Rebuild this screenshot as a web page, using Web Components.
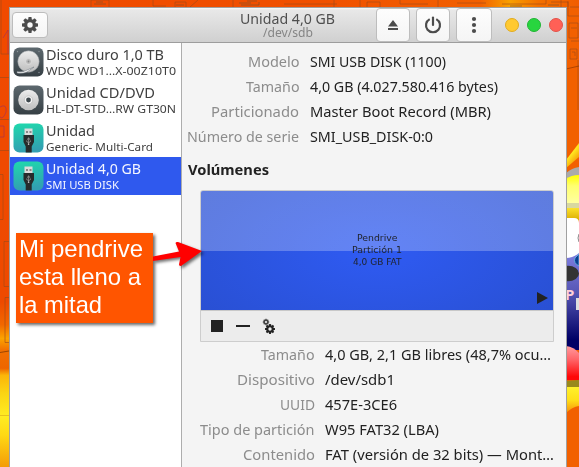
<!DOCTYPE html>
<html lang="es">
<head>
<meta charset="utf-8">
<title>Discos</title>
<style>
html,body{margin:0;width:579px;height:467px;overflow:hidden}
body{font-family:"Noto Sans",sans-serif}
</style>
</head>
<body>
<disk-desktop></disk-desktop>
<script>
const define=(name,html,ready)=>customElements.define(name,class extends HTMLElement{
  connectedCallback(){
    if(this.shadowRoot)return;
    const r=this.attachShadow({mode:'open'});
    const t=document.createElement('template');
    t.innerHTML=typeof html==='function'?html(this):html;
    r.append(t.content.cloneNode(true));
    if(ready)ready(this,r);
  }
});

// One line of text condensed or widened to a given pixel width.
define('fit-text',`<style>:host{display:block;white-space:pre;flex:none}span{display:inline-block;transform-origin:0 50%}</style><span><slot></slot></span>`,(el,r)=>{
  const s=r.querySelector('span'),w=+el.getAttribute('w');
  s.style.transform='scaleX('+(w/s.getBoundingClientRect().width)+')';
  el.style.width=w+'px';
});

define('wall-paper',`<style>:host{display:block;position:absolute;inset:0}svg{display:block}</style>
<svg width="579" height="467" viewBox="0 0 579 467">
<defs>
<linearGradient id="l" x1="0" y1="0" x2="0" y2="1"><stop offset="0" stop-color="#f04a00"/><stop offset=".64" stop-color="#ee4a00"/><stop offset=".69" stop-color="#f26800"/><stop offset=".72" stop-color="#fba300"/><stop offset=".745" stop-color="#f17000"/><stop offset=".785" stop-color="#ee6500"/><stop offset=".80" stop-color="#fbb508"/><stop offset=".84" stop-color="#fbd514"/><stop offset=".89" stop-color="#ffec22"/><stop offset=".93" stop-color="#ffd914"/><stop offset="1" stop-color="#f49c08"/></linearGradient>
<linearGradient id="t"><stop offset="0" stop-color="#f04a00"/><stop offset=".55" stop-color="#f05000"/><stop offset=".83" stop-color="#f26000"/><stop offset=".88" stop-color="#f8a000"/><stop offset=".93" stop-color="#f37000"/><stop offset="1" stop-color="#f15c00"/></linearGradient>
<linearGradient id="y" x1="0" y1="0" x2="0" y2="1"><stop offset="0" stop-color="#ffff00"/><stop offset=".35" stop-color="#ffff70"/><stop offset="1" stop-color="#ffffa8"/></linearGradient>
<linearGradient id="g" x1="0" y1="0" x2="0" y2="1"><stop offset="0" stop-color="#fce22c"/><stop offset="1" stop-color="#d9a800"/></linearGradient>
<linearGradient id="b" x1="0" y1="0" x2="0" y2="1"><stop offset="0" stop-color="#8585e8"/><stop offset=".45" stop-color="#5656b4"/><stop offset=".9" stop-color="#000066"/></linearGradient>
<linearGradient id="r" x1="0" y1="0" x2="0" y2="1"><stop offset="0" stop-color="#ff9ca0"/><stop offset=".4" stop-color="#ff6468"/><stop offset=".9" stop-color="#ff0808"/></linearGradient>
<linearGradient id="q" x1="0" y1="0" x2="0" y2="1"><stop offset="0" stop-color="#fff12c"/><stop offset=".5" stop-color="#ffdf18"/><stop offset="1" stop-color="#f79008"/></linearGradient>
<linearGradient id="d" x1="0" y1="0" x2=".6" y2="1"><stop offset="0" stop-color="#f26000"/><stop offset=".5" stop-color="#ffe820"/><stop offset="1" stop-color="#f58a00"/></linearGradient>
</defs>
<rect width="579" height="467" fill="url(#t)"/><rect y="8" width="10" height="459" fill="url(#l)"/>
<rect x="566" y="8" width="13" height="459" fill="#f26000"/>
<g fill="none" stroke="#9c4a18" stroke-opacity=".6">
<path d="M0 77.500h9M0 119.500h9M0 150.500h9M0 219.500h3v-45h-3M9 241.500h-5v45h5M9 297.500h-4v45h4M1 0v54h8"/>
<path d="M3 38l5-8v24M0 107q7-4 6 5q-3 8-6 5M0 126h4v11h-4" stroke="#a03058"/>
<path d="M0 352.500l9-1.500" stroke="#632800" stroke-width="1"/><path d="M0 415.500h9" stroke="#d8a818"/>
<path d="M91 7V0h18v7M153 0v6h13M175 7V2h11v5M190 7l8-7M233 0v7M284 4h53M334 0v7M360 7V0M367 7V2h13v5M400 0v4h28M438 0v7M457 3h29M502 4h44V0M551 2h17v5M561 0v7"/>
<path d="M94 4h12M96 2h7M239 3h12M241 5h18v-3M247 1h10M176 5h8M510 6h12M548 5h11" stroke="#76502c"/>
<path d="M568 1v15h11M570 7h9M569 23h9v15h-9zM571 28h6M571 41h8M570 49h7v10h-7zM572 52h3v4M578 60v50"/>
<path d="M566 69l13-3" stroke="#803000"/></g>
<path d="M566 160L579 143V157L566 168z" fill="url(#d)"/>
<path d="M566 173q6-5 13-6v9l-13 5z" fill="#aaa"/>
<path d="M566 179q5-4 13-4v31h-13z" fill="url(#y)"/>
<rect x="566" y="203" width="13" height="5" fill="#d8d8a0"/>
<rect x="566" y="208" width="13" height="13" fill="url(#g)"/>
<rect x="566" y="246" width="13" height="104" fill="url(#b)"/>
<path d="M566 218h8q5 0 5 5v30q-6 5-13 5z" fill="#fff"/><path d="M579 234q-2 4 0 8" stroke="#888" fill="none"/>
<path d="M579 254l-4 4q-2 5 4 8z" fill="#0b3f91" stroke="#65a9df"/>
<ellipse cx="568" cy="273.500" rx="11" ry="7.700" fill="#333"/>
<text x="565" y="300" font-family="Noto Sans" font-weight="700" font-size="15" fill="#ffd0d8">P</text>
<rect x="576" y="298" width="3" height="12" fill="#ddd"/>
<path d="M566 346q8 1 13 7v27h-13z" fill="url(#r)"/>
<path d="M566 381l13-1v7l-13 1z" fill="#99891c"/><path d="M566 387h13v19q-7 1-13 7z" fill="url(#q)"/>
</svg>`);

const gear=(cx,cy,r,hole,color)=>{
  let s='';
  for(let i=0;i<8;i++)s+=`<rect x="${cx-r*.21}" y="${cy-r}" width="${r*.42}" height="${r*.5}" rx="${r*.08}" transform="rotate(${i*45} ${cx} ${cy})" fill="${color}"/>`;
  return s+`<circle cx="${cx}" cy="${cy}" r="${(r*.76+hole)/2}" fill="none" stroke="${color}" stroke-width="${r*.76-hole}"/>`;
};
const C='#4c4c4c';
const glyphs={
  gear:`<svg width="18" height="18">${gear(9,9,8,2.7,C)}</svg>`,
  eject:`<svg width="18" height="18"><path d="M4 10.500L9 4l5 6.500zM4 12h10v2H4z" fill="${C}"/></svg>`,
  power:`<svg width="18" height="18"><path d="M5.700 3.100a7 7 0 1 0 6.600 0" fill="none" stroke="${C}" stroke-width="2.200"/><path d="M9 1.500v7.500" stroke="${C}" stroke-width="2.200" stroke-linecap="round"/></svg>`,
  more:`<svg width="18" height="18" fill="${C}"><circle cx="9" cy="3" r="2.100"/><circle cx="9" cy="9" r="2.100"/><circle cx="9" cy="15" r="2.100"/></svg>`
};
define('bar-button',el=>`<style>:host{display:flex;align-items:center;justify-content:center;box-sizing:border-box;border:1px solid #bdbdbd;border-radius:4px;background:linear-gradient(#fdfdfd,#f5f5f5);flex:none}svg{display:block}</style>${glyphs[el.getAttribute('icon')]}`);
define('window-dot',`<style>:host{display:block;width:14px;height:14px;box-sizing:border-box;border-radius:50%;background:var(--c);border:1px solid var(--e)}</style>`);

define('title-bar',`<style>
:host{display:flex;align-items:center;height:35px;box-sizing:border-box;border-bottom:1px solid #9d9d9d;background:linear-gradient(#fafafa 0,#e8e8e8 2px,#d0d0d0 100%);padding-left:2px}
.name{flex:1;display:flex;flex-direction:column;align-items:center;align-self:flex-start;padding-left:151px}
.a{font-size:14.500px;line-height:20px;color:#4f4f4f}.b{font-size:12px;line-height:12px;margin-top:-1px;color:#858585}
.gear{width:36px;height:26px}.g{width:34px;height:34px}.h{width:36px;height:34px}
.tools{display:flex;gap:6px}.dots{display:flex;gap:8px;padding:0 3px 0 13px}
</style>
<bar-button class="gear" icon="gear"></bar-button>
<div class="name"><fit-text class="a" w="95">Unidad 4,0 GB</fit-text><fit-text class="b" w="50">/dev/sdb</fit-text></div>
<div class="tools"><bar-button class="g" icon="eject"></bar-button><bar-button class="g" icon="power"></bar-button><bar-button class="h" icon="more"></bar-button></div>
<div class="dots"><window-dot style="--c:#ffc931;--e:#e1ac20"></window-dot><window-dot style="--c:#28d53f;--e:#20b534"></window-dot><window-dot style="--c:#ff6056;--e:#e2534a"></window-dot></div>`);

const defs=`<defs><linearGradient id="k" x1="0" y1="0" x2="0" y2="1"><stop offset="0" stop-color="#5d686e"/><stop offset="1" stop-color="#363f44"/></linearGradient><linearGradient id="u" x1="0" y1="0" x2=".15" y2="1"><stop offset="0" stop-color="#1fd9ac"/><stop offset="1" stop-color="#329fb2"/></linearGradient><linearGradient id="m" x1="0" y1="0" x2="0" y2="1"><stop offset="0" stop-color="#ededed"/><stop offset="1" stop-color="#bdbdbd"/></linearGradient></defs>`;
const drives={
  hdd:`<rect x=".5" y=".5" width="30" height="29" rx="6" fill="url(#k)"/><g fill="#8b9498"><circle cx="4.500" cy="4.500" r=".7"/><circle cx="26" cy="4.500" r=".7"/><circle cx="26" cy="25.500" r=".7"/></g><circle cx="15.500" cy="14.500" r="10.700" fill="url(#m)" stroke="#92999c" stroke-width=".5"/><circle cx="15.500" cy="14.500" r="3" fill="#bcbcbc" stroke="#e4e4e4" stroke-width=".7"/><circle cx="15.500" cy="14.500" r=".9" fill="#888"/><path d="M4 24.500q6 1 9-1l8-3.500-7 5q-4 2-10 1z" fill="#f7f7f7" stroke="#68737a" stroke-width=".5"/>`,
  cd:`<rect x=".5" y=".5" width="30" height="29" rx="6" fill="url(#k)"/><circle cx="15.500" cy="15" r="10.300" fill="url(#m)"/><circle cx="15.500" cy="15" r="4.200" fill="#f3f3f3" stroke="#aaa" stroke-width=".5"/><circle cx="15.500" cy="15" r="2.400" fill="#3e474c"/>`,
  usb:`<rect x=".5" y=".5" width="30" height="29" rx="6" fill="url(#u)"/><path d="M11.500 5.500h8v7h-8z" fill="#dcdcdc"/><path d="M13 8h2v2h-2zM16.500 8h2v2h-2z" fill="#888"/><path d="M10.500 12h10.500v7l-2.300 4.500v6h-6v-6l-2.200-4.500z" fill="#272b2c"/><path d="M15.600 21v-5.500m-1.200 1.200l1.200-2 1.200 2M13.700 17.500v1l1.900 1.200 1.900-1.200v-1" stroke="#bbb" stroke-width=".6" fill="none"/><circle cx="15.600" cy="21.300" r=".8" fill="#ccc"/>`
};
define('drive-row',el=>`<style>
:host{display:flex;height:38px;box-sizing:border-box;padding:4px 0 0 3px;color:#404040}
:host([selected]){background:#2f59ee;color:#f4f6ff}
svg{flex:none;margin-right:2px}
.t{display:flex;flex-direction:column;margin-top:-2px}::slotted(.n){font-size:14.500px;line-height:19px}::slotted(.s){font-size:11.500px;line-height:13px}
</style><svg width="31" height="30">${defs}${drives[el.getAttribute('kind')]}</svg><div class="t"><slot></slot></div>`);

define('drive-list',`<style>:host{display:block;width:171px;flex:none;background:#fff;border-right:1px solid #adadad}</style>
<drive-row kind="hdd"><fit-text class="n" w="118">Disco duro 1,0 TB</fit-text><fit-text class="s" w="130">WDC WD1…X-00Z10T0</fit-text></drive-row>
<drive-row kind="cd"><fit-text class="n" w="109">Unidad CD/DVD</fit-text><fit-text class="s" w="130">HL-DT-STD…RW GT30N</fit-text></drive-row>
<drive-row kind="usb"><fit-text class="n" w="49">Unidad</fit-text><fit-text class="s" w="107">Generic- Multi-Card</fit-text></drive-row>
<drive-row kind="usb" selected><fit-text class="n" w="95">Unidad 4,0 GB</fit-text><fit-text class="s" w="73">SMI USB DISK</fit-text></drive-row>`);

define('info-row',el=>`<style>:host{display:flex;height:25px;gap:var(--gap,10px);font-size:14.500px;line-height:25px;color:#222}
.k{width:var(--key);display:flex;justify-content:flex-end;color:#8c8c8c;flex:none}</style>
<div class="k"><fit-text w="${el.getAttribute('kw')}">${el.getAttribute('key')}</fit-text></div><fit-text w="${el.getAttribute('vw')}">${el.textContent}</fit-text>`);

define('volume-map',`<style>
:host{display:block;width:354px;height:152px;box-sizing:border-box;border:1px solid #cdcdcd;border-radius:3px 3px 0 0;background:#ececec;overflow:hidden}
.v{height:119px;display:flex;flex-direction:column;align-items:center;justify-content:center;position:relative;box-sizing:border-box;
background:linear-gradient(rgba(255,255,255,.25) 60px,transparent 60px),radial-gradient(ellipse 250px 118px at 50% 50%,#2f5bf3,#284ece)}
.v fit-text{font:9.500px/12px "DejaVu Sans",sans-serif;color:#20242e;position:relative;top:-1px}
.p{position:absolute;right:5px;bottom:6px}
.b{height:31px;box-sizing:border-box;border-top:1px solid #c8c8c8;display:flex;align-items:center;padding-left:10px}
svg{display:block}
</style>
<div class="v"><fit-text w="40.500">Pendrive</fit-text><fit-text w="50">Partición 1</fit-text><fit-text w="48.500">4,0 GB FAT</fit-text><svg class="p" width="11" height="12"><path d="M0 0L11 6 0 12z" fill="#222"/></svg></div>
<div class="b"><svg width="66" height="18"><rect y="3" width="12" height="12" fill="#222"/><rect x="25" y="8" width="14" height="2" fill="#222"/>${gear(59,12,5,1.700,'#222')}${gear(55,5,3.200,1.100,'#444')}</svg></div>`);

define('drive-details',`<style>
:host{display:block;flex:1;background:#f4f4f4;padding:6px 0 0;overflow:hidden}
.a{--key:117px;--gap:11px}.b{--key:132.500px}
.h{font-size:14.500px;line-height:24px;font-weight:700;color:#222;margin:8px 0 9px 6px}
volume-map{margin-left:18px}
</style>
<div class="a">
<info-row key="Modelo" kw="51.500" vw="136">SMI USB DISK (1100)</info-row>
<info-row key="Tamaño" kw="53.500" vw="188">4,0 GB (4.027.580.416 bytes)</info-row>
<info-row key="Particionado" kw="88" vw="181">Master Boot Record (MBR)</info-row>
<info-row key="Número de serie" kw="112" vw="123">SMI_USB_DISK-0:0</info-row></div>
<fit-text class="h" w="81">Volúmenes</fit-text>
<volume-map></volume-map>
<div class="b">
<info-row key="Tamaño" kw="53.500" vw="226">4,0 GB, 2,1 GB libres (48,7% ocu…</info-row>
<info-row key="Dispositivo" kw="78" vw="70">/dev/sdb1</info-row>
<info-row key="UUID" kw="35" vw="72">457E-3CE6</info-row>
<info-row key="Tipo de partición" kw="114.500" vw="114">W95 FAT32 (LBA)</info-row>
<info-row key="Contenido" kw="72" vw="229">FAT (versión de 32 bits) — Mont…</info-row></div>`);

define('app-window',`<style>:host{display:flex;flex-direction:column;position:absolute;left:9px;top:7px;width:556px;height:459px;border:1px solid #a0a0a0;border-bottom:0;overflow:hidden}.m{display:flex;flex:1;min-height:0}</style>
<title-bar></title-bar><div class="m"><drive-list></drive-list><drive-details></drive-details></div>`);

define('call-out',`<style>
:host{position:absolute;left:16px;top:233px;width:187px;height:90px;display:block;font:24px/28px "Liberation Sans",sans-serif;color:#fff}
.n{width:137px;height:90px;box-sizing:border-box;padding:2px 0 0 3px;background:#ff5500;box-shadow:2px 2px 3px rgba(0,0,0,.6)}
svg{position:absolute;left:137px;top:0;filter:drop-shadow(2px 2px 1.500px rgba(0,0,0,.55))}
</style><div class="n"><fit-text w="124">Mi pendrive</fit-text><fit-text w="122">esta lleno a</fit-text><fit-text w="83">la mitad</fit-text></div>
<svg width="54" height="40"><path d="M0 23.500L26 18.500 22.500 10Q23 8.500 25 9L49 18 28 33Q26 33 26 31.500L27.500 24 0 28z" fill="#f00"/></svg>`);

define('disk-desktop',`<style>:host{display:block;position:relative;width:579px;height:467px;overflow:hidden}</style>
<wall-paper></wall-paper><app-window></app-window><call-out></call-out>`);
</script>
</body>
</html>
